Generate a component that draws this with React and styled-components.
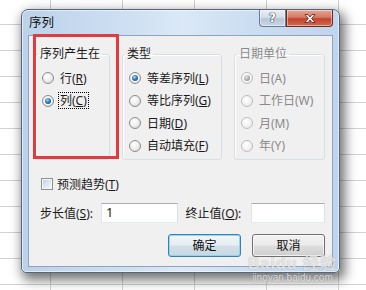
import React from "react";
import styled, { createGlobalStyle } from "styled-components";

const GlobalStyle = createGlobalStyle`
  html, body {
    margin: 0;
    padding: 0;
  }
  body {
    width: 366px;
    height: 290px;
    overflow: hidden;
    background-color: #ffffff;
    background-image:
      linear-gradient(to bottom, transparent 24px, #d2d2d2 24px, #d2d2d2 25px, transparent 25px),
      linear-gradient(to right, transparent 50px, #d2d2d2 50px, #d2d2d2 51px, transparent 51px);
    background-size: 100% 26px, 72px 100%;
    font-family: "Noto Sans", "Noto Sans CJK SC", sans-serif;
    font-size: 12px;
    color: #1a1a1a;
  }
`;

const Desk = styled.div`
  position: relative;
  width: 366px;
  height: 290px;
  box-sizing: border-box;
  padding: 9px 0 0 21px;
  overflow: hidden;
`;

const Window = styled.div`
  width: 319px;
  height: 264px;
  box-sizing: border-box;
  display: flex;
  flex-direction: column;
  padding: 0 6px 5px 6px;
  border: 1px solid #55667c;
  border-radius: 7px 7px 5px 5px;
  background: linear-gradient(
    to right,
    #bcd2ea 0%,
    #cfe0f3 35%,
    #dbe8f7 50%,
    #c9dcf1 75%,
    #c0d5ed 100%
  );
  box-shadow: inset 0 0 0 1px rgba(255, 255, 255, 0.55),
    3px 5px 12px 2px rgba(0, 0, 0, 0.55);
`;

const TitleBar = styled.div`
  height: 25px;
  flex: none;
  display: flex;
  justify-content: space-between;
  align-items: flex-start;
`;

const Title = styled.div`
  padding: 5px 0 0 1px;
  font-size: 12.5px;
  line-height: 15px;
  color: #111;
`;

const Caption = styled.div`
  display: flex;
`;

const CaptionButton = styled.div`
  width: ${(p) => p.$w}px;
  height: 17px;
  box-sizing: border-box;
  display: flex;
  align-items: center;
  justify-content: center;
  border: 1px solid ${(p) => (p.$close ? "#6e2a20" : "#6b7b8e")};
  border-top: none;
  border-radius: ${(p) => (p.$close ? "0 0 4px 0" : "0 0 0 4px")};
  background: ${(p) =>
    p.$close
      ? "linear-gradient(to bottom, #e6a596 0%, #d57a66 45%, #c0432c 55%, #d06a4f 100%)"
      : "linear-gradient(to bottom, #e9eef4 0%, #d5dee9 45%, #b7c6d8 55%, #c9d6e4 100%)"};
  box-shadow: inset 0 0 0 1px rgba(255, 255, 255, 0.45);
`;

const HelpGlyph = styled.span`
  font-family: "DejaVu Sans", sans-serif;
  font-weight: bold;
  font-size: 12px;
  line-height: 12px;
  color: #ffffff;
  text-shadow: 0 0 1px #2b3440, 0 0 1px #2b3440, 0 0 1px #2b3440;
`;

const Client = styled.div`
  flex: 1;
  box-sizing: border-box;
  border: 1px solid #8ea3bd;
  background: #f0f0f0;
  padding: 10px 7px 0 6px;
  display: flex;
  flex-direction: column;
`;

const Groups = styled.div`
  display: flex;
  gap: 12px;
`;

const Group = styled.fieldset`
  width: ${(p) => p.$w}px;
  height: 114px;
  box-sizing: border-box;
  margin: 0;
  padding: 0;
  min-width: 0;
  border: 1px solid #d5dfe5;
  border-radius: 3px;
  box-shadow: inset 1px 1px 0 #ffffff;
`;

const Legend = styled.legend`
  padding: 0 2px;
  margin-left: 2px;
  line-height: 16px;
  font-size: 12px;
  color: ${(p) => (p.$disabled ? "#8a8a8a" : "#1a1a1a")};
`;

const Options = styled.div`
  padding: 5px 0 0 6px;
  display: flex;
  flex-direction: column;
`;

const Option = styled.label`
  height: 22.5px;
  display: flex;
  align-items: center;
  gap: 6px;
  line-height: 15px;
  white-space: nowrap;
  color: ${(p) => (p.$disabled ? "#8a8a8a" : "#1a1a1a")};
`;

const RadioCircle = styled.span`
  width: 12px;
  height: 12px;
  flex: none;
  box-sizing: border-box;
  border-radius: 50%;
  border: 1px solid ${(p) => (p.$disabled ? "#bdbdbd" : "#8c8c8c")};
  background: ${(p) =>
    p.$disabled
      ? "radial-gradient(circle at 40% 35%, #ffffff 0%, #f3f3f3 50%, #e2e2e2 100%)"
      : "radial-gradient(circle at 40% 35%, #ffffff 0%, #f0f0f0 45%, #cfcfcf 100%)"};
  display: flex;
  align-items: center;
  justify-content: center;

  &::after {
    content: "";
    display: ${(p) => (p.$checked ? "block" : "none")};
    width: 6px;
    height: 6px;
    border-radius: 50%;
    background: ${(p) =>
      p.$disabled
        ? "radial-gradient(circle at 40% 35%, #e8e8e8 0%, #a8a8a8 55%, #7e7e7e 100%)"
        : "radial-gradient(circle at 40% 35%, #a8dcfa 0%, #2d7ec0 45%, #0b3d6b 100%)"};
    box-shadow: 0 0 0 1px rgba(255, 255, 255, 0.7);
  }
`;

const FocusText = styled.span`
  margin-left: -2px;
  padding: 0 1px;
  border: 1px dotted #000;
  line-height: 15px;
`;

const U = styled.span`
  text-decoration: underline;
  text-underline-offset: 1px;
`;

const CheckRow = styled.label`
  margin-top: 16px;
  height: 16px;
  padding-left: 6px;
  display: flex;
  align-items: center;
  gap: 4px;
  line-height: 15px;
`;

const CheckBox = styled.span`
  width: 12px;
  height: 12px;
  box-sizing: border-box;
  border: 1px solid #8e8f8f;
  background: linear-gradient(135deg, #b9cde3 0%, #dbe6f1 50%, #f5f8fb 100%);
  box-shadow: inset 0 0 0 1px #f4f7fa;
`;

const FieldRow = styled.div`
  margin-top: 11px;
  height: 20px;
  padding-left: 5px;
  display: flex;
  align-items: center;
`;

const FieldLabel = styled.span`
  width: ${(p) => p.$w}px;
  margin-left: ${(p) => p.$gap || 0}px;
  line-height: 15px;
  white-space: nowrap;
`;

const TextBox = styled.div`
  width: ${(p) => p.$w}px;
  height: 20px;
  box-sizing: border-box;
  border: 1px solid #abadb3;
  border-color: #abadb3 #dbdfe6 #e3e9ef #e2e3ea;
  background: #ffffff;
  padding: 0 4px;
  line-height: 18px;
  font-size: 12px;
  color: #111;
`;

const ButtonRow = styled.div`
  margin-top: 11px;
  display: flex;
  justify-content: flex-end;
  gap: 11px;
`;

const Button = styled.div`
  width: 73px;
  height: 23px;
  box-sizing: border-box;
  display: flex;
  align-items: center;
  justify-content: center;
  border-radius: 3px;
  border: 1px solid ${(p) => (p.$default ? "#3c7fb1" : "#707070")};
  background: ${(p) =>
    p.$default
      ? "linear-gradient(to bottom, #f0f5f8 0%, #e6eef3 48%, #d3dfe7 52%, #c9d7e0 100%)"
      : "linear-gradient(to bottom, #f2f2f2 0%, #ebebeb 48%, #dddddd 52%, #cfcfcf 100%)"};
  box-shadow: inset 0 0 0 1px
    ${(p) => (p.$default ? "rgba(130, 215, 245, 0.9)" : "rgba(255, 255, 255, 0.7)")};
  line-height: 15px;
  color: #111;
`;

const Annotation = styled.div`
  position: absolute;
  left: 33px;
  top: 34px;
  width: 86px;
  height: 125px;
  box-sizing: border-box;
  border: 3px solid #e43a3e;
  pointer-events: none;
`;

const Watermark = styled.div`
  position: absolute;
  left: 248px;
  top: 256px;
  display: flex;
  flex-direction: column;
  align-items: center;
  pointer-events: none;
  color: rgba(255, 255, 255, 0.7);
  text-shadow: 0 0 1px rgba(90, 90, 90, 0.5);
`;

const MarkBig = styled.div`
  font-family: "Liberation Sans", "Noto Sans CJK SC", sans-serif;
  font-size: 16px;
  font-weight: bold;
  line-height: 16px;
  letter-spacing: 1px;
`;

const MarkSmall = styled.div`
  font-family: "Liberation Sans", sans-serif;
  font-size: 10px;
  line-height: 11px;
  color: rgba(255, 255, 255, 0.7);
`;

const CloseIcon = () => (
  <svg width="14" height="11" viewBox="0 0 14 11">
    <path
      d="M2 1.5 L5 1.5 L7 4 L9 1.5 L12 1.5 L8.6 5.5 L12 9.5 L9 9.5 L7 7 L5 9.5 L2 9.5 L5.4 5.5 Z"
      fill="#ffffff"
      stroke="#5a1d14"
      strokeWidth="0.8"
      strokeLinejoin="round"
    />
  </svg>
);

const Radio = ({ checked, disabled, focus, children }) => (
  <Option $disabled={disabled}>
    <RadioCircle $checked={checked} $disabled={disabled} />
    {focus ? <FocusText>{children}</FocusText> : <span>{children}</span>}
  </Option>
);

export default function App() {
  return (
    <>
      <GlobalStyle />
      <Desk>
        <Window>
          <TitleBar>
            <Title>序列</Title>
            <Caption>
              <CaptionButton $w={27}>
                <HelpGlyph>?</HelpGlyph>
              </CaptionButton>
              <CaptionButton $w={47} $close>
                <CloseIcon />
              </CaptionButton>
            </Caption>
          </TitleBar>
          <Client>
            <Groups>
              <Group $w={75}>
                <Legend>序列产生在</Legend>
                <Options>
                  <Radio>
                    行(<U>R</U>)
                  </Radio>
                  <Radio checked focus>
                    列(<U>C</U>)
                  </Radio>
                </Options>
              </Group>
              <Group $w={100}>
                <Legend>类型</Legend>
                <Options>
                  <Radio checked>
                    等差序列(<U>L</U>)
                  </Radio>
                  <Radio>
                    等比序列(<U>G</U>)
                  </Radio>
                  <Radio>
                    日期(<U>D</U>)
                  </Radio>
                  <Radio>
                    自动填充(<U>F</U>)
                  </Radio>
                </Options>
              </Group>
              <Group $w={91}>
                <Legend $disabled>日期单位</Legend>
                <Options>
                  <Radio checked disabled>
                    日(A)
                  </Radio>
                  <Radio disabled>工作日(W)</Radio>
                  <Radio disabled>月(M)</Radio>
                  <Radio disabled>年(Y)</Radio>
                </Options>
              </Group>
            </Groups>
            <CheckRow>
              <CheckBox />
              <span>
                预测趋势(<U>T</U>)
              </span>
            </CheckRow>
            <FieldRow>
              <FieldLabel $w={63}>
                步长值(<U>S</U>):
              </FieldLabel>
              <TextBox $w={78}>1</TextBox>
              <FieldLabel $w={67} $gap={8}>
                终止值(<U>O</U>):
              </FieldLabel>
              <TextBox $w={76} />
            </FieldRow>
            <ButtonRow>
              <Button $default>确定</Button>
              <Button>取消</Button>
            </ButtonRow>
          </Client>
        </Window>
        <Annotation />
        <Watermark>
          <MarkBig>Baidu 经验</MarkBig>
          <MarkSmall>jingyan.baidu.com</MarkSmall>
        </Watermark>
      </Desk>
    </>
  );
}
